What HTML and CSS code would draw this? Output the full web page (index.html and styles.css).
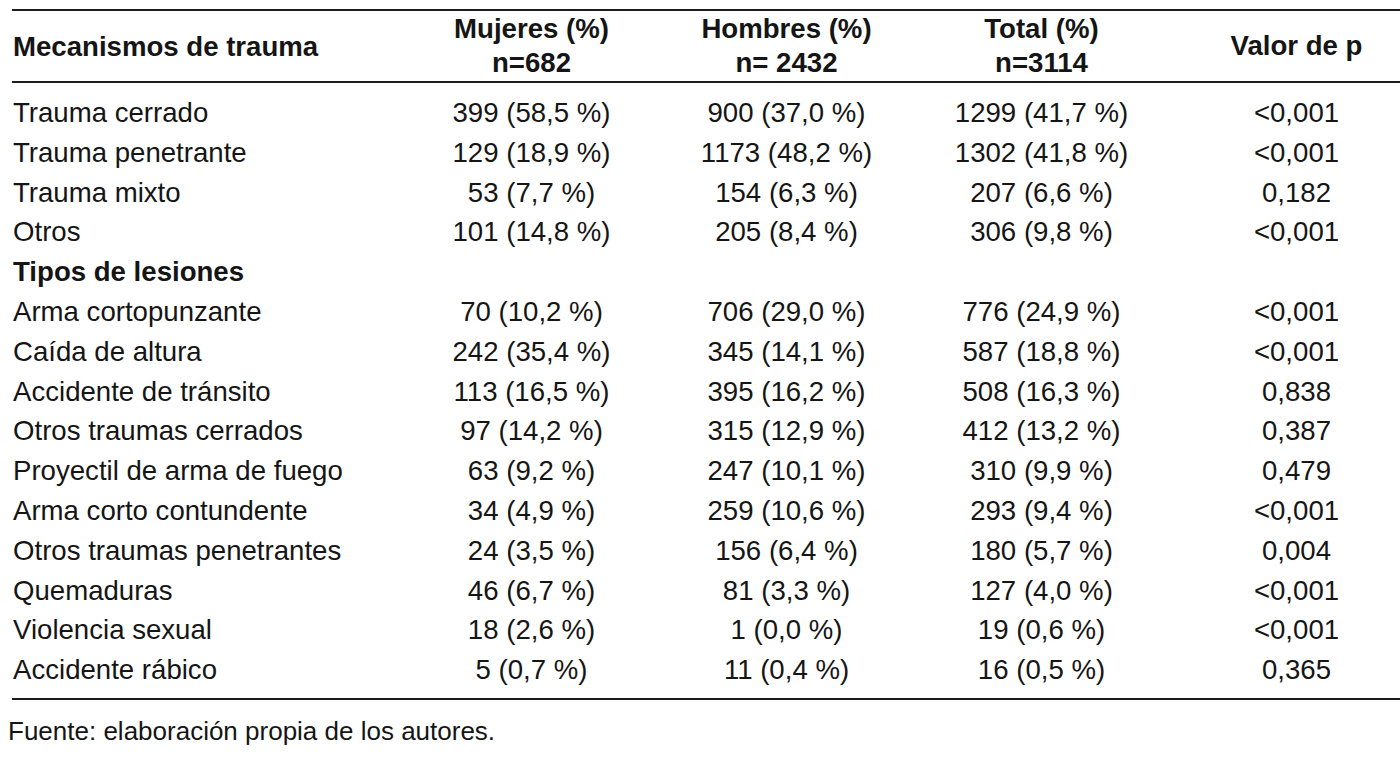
FILE: index.html
```html
<!DOCTYPE html>
<html lang="es">
<head>
<meta charset="utf-8">
<title>Mecanismos de trauma</title>
<link rel="stylesheet" href="styles.css">
</head>
<body>
<table class="tbl">
  <colgroup>
    <col class="c-label">
    <col class="c-num">
    <col class="c-num">
    <col class="c-num">
    <col class="c-num">
  </colgroup>
  <thead>
    <tr>
      <th class="lbl">Mecanismos de trauma</th>
      <th>Mujeres (%)<br>n=682</th>
      <th>Hombres (%)<br>n= 2432</th>
      <th>Total (%)<br>n=3114</th>
      <th>Valor de p</th>
    </tr>
  </thead>
  <tbody>
    <tr class="first"><td class="lbl">Trauma cerrado</td><td>399 (58,5 %)</td><td>900 (37,0 %)</td><td>1299 (41,7 %)</td><td>&lt;0,001</td></tr>
    <tr><td class="lbl">Trauma penetrante</td><td>129 (18,9 %)</td><td>1173 (48,2 %)</td><td>1302 (41,8 %)</td><td>&lt;0,001</td></tr>
    <tr><td class="lbl">Trauma mixto</td><td>53 (7,7 %)</td><td>154 (6,3 %)</td><td>207 (6,6 %)</td><td>0,182</td></tr>
    <tr><td class="lbl">Otros</td><td>101 (14,8 %)</td><td>205 (8,4 %)</td><td>306 (9,8 %)</td><td>&lt;0,001</td></tr>
    <tr><td class="lbl sec">Tipos de lesiones</td><td></td><td></td><td></td><td></td></tr>
    <tr><td class="lbl">Arma cortopunzante</td><td>70 (10,2 %)</td><td>706 (29,0 %)</td><td>776 (24,9 %)</td><td>&lt;0,001</td></tr>
    <tr><td class="lbl">Caída de altura</td><td>242 (35,4 %)</td><td>345 (14,1 %)</td><td>587 (18,8 %)</td><td>&lt;0,001</td></tr>
    <tr><td class="lbl">Accidente de tránsito</td><td>113 (16,5 %)</td><td>395 (16,2 %)</td><td>508 (16,3 %)</td><td>0,838</td></tr>
    <tr><td class="lbl">Otros traumas cerrados</td><td>97 (14,2 %)</td><td>315 (12,9 %)</td><td>412 (13,2 %)</td><td>0,387</td></tr>
    <tr><td class="lbl">Proyectil de arma de fuego</td><td>63 (9,2 %)</td><td>247 (10,1 %)</td><td>310 (9,9 %)</td><td>0,479</td></tr>
    <tr><td class="lbl">Arma corto contundente</td><td>34 (4,9 %)</td><td>259 (10,6 %)</td><td>293 (9,4 %)</td><td>&lt;0,001</td></tr>
    <tr><td class="lbl">Otros traumas penetrantes</td><td>24 (3,5 %)</td><td>156 (6,4 %)</td><td>180 (5,7 %)</td><td>0,004</td></tr>
    <tr><td class="lbl">Quemaduras</td><td>46 (6,7 %)</td><td>81 (3,3 %)</td><td>127 (4,0 %)</td><td>&lt;0,001</td></tr>
    <tr><td class="lbl">Violencia sexual</td><td>18 (2,6 %)</td><td>1 (0,0 %)</td><td>19 (0,6 %)</td><td>&lt;0,001</td></tr>
    <tr class="last"><td class="lbl">Accidente rábico</td><td>5 (0,7 %)</td><td>11 (0,4 %)</td><td>16 (0,5 %)</td><td>0,365</td></tr>
  </tbody>
</table>
<p class="note">Fuente: elaboración propia de los autores.</p>
</body>
</html>
```

FILE: styles.css
```css
html, body {
  margin: 0;
  padding: 0;
  background: #ffffff;
  overflow: hidden;
}

body {
  font-family: "Liberation Sans", Arial, sans-serif;
  color: #151515;
  width: 1400px;
  height: 762px;
}

.tbl {
  margin: 9px 0 0 12px;
  border-collapse: collapse;
  table-layout: fixed;
  width: 1412px;
  border-top: 2px solid #1c1c1c;
  border-bottom: 2px solid #1c1c1c;
  font-size: 27.6px;
}

.c-label { width: 392px; }
.c-num { width: 255px; }

.tbl th {
  font-weight: bold;
  line-height: 34px;
  padding: 1px 0 1px 0;
  text-align: center;
  vertical-align: middle;
  border-bottom: 2px solid #1c1c1c;
}

.tbl th.lbl {
  text-align: left;
  padding-left: 1px;
  padding-top: 3px;
}

.tbl td {
  line-height: 39.8px;
  padding: 0;
  text-align: center;
  white-space: nowrap;
}

.tbl td.lbl {
  text-align: left;
  padding-left: 1px;
}

.tbl td.sec {
  font-weight: bold;
}

.tbl tr.first td { padding-top: 10px; }
.tbl tr.last td { padding-bottom: 8px; }

.note {
  margin: 16px 0 0 8px;
  font-size: 26px;
  line-height: 30px;
}
```
